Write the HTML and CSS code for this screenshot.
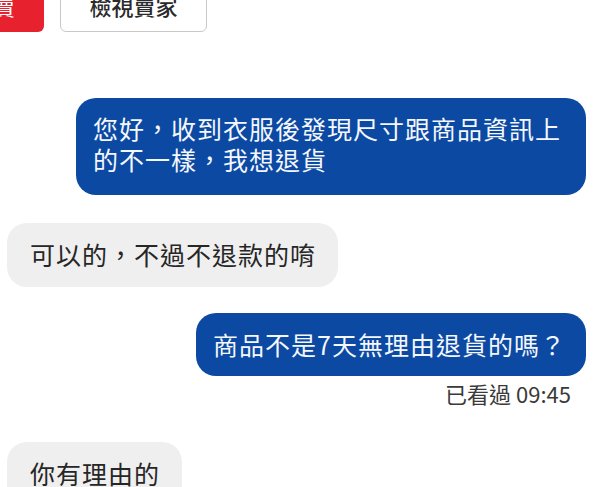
FILE: index.html
```html
<!DOCTYPE html>
<html lang="zh-Hant">
<head>
    <meta charset="UTF-8">
    <meta name="viewport" content="width=device-width, initial-scale=1.0">
    <title>聊聊</title>
    <link rel="stylesheet" href="styles.css">
</head>
<body>
    <!-- Top actions -->
    <div class="topbar">
        <div class="btn-red">賣</div>
        <div class="btn-outline">檢視賣家</div>
    </div>

    <!-- Messages -->
    <div class="chat">
        <div class="bubble mine wide">您好，收到衣服後發現尺寸跟商品資訊上的不一樣，我想退貨</div>
        <div class="bubble theirs">可以的，不過不退款的唷</div>
        <div class="bubble mine">商品不是7天無理由退貨的嗎？</div>
        <div class="seen">已看過 09:45</div>
        <div class="bubble theirs last">你有理由的</div>
    </div>
</body>
</html>
```

FILE: styles.css
```css
/* General */
body {
    margin: 0;
    background: #fff;
    font-family: "Noto Sans CJK TC", "Noto Sans", sans-serif;
    color: #222;
    overflow: hidden;
    height: 487px;
}

/* Top actions */
.topbar {
    display: flex;
    gap: 16px;
    margin-top: -22px;
}

.btn-red {
    height: 54px;
    margin-left: -30px;
    padding: 0 29px 0 23px;
    background: #e8212e;
    color: #fff;
    font-size: 22px;
    line-height: 54px;
    border-radius: 6px;
}

.btn-outline {
    box-sizing: border-box;
    width: 147px;
    height: 54px;
    border: 1px solid #c9c9c9;
    border-radius: 6px;
    font-size: 22px;
    line-height: 52px;
    text-align: center;
    color: #2a2a2a;
    font-weight: 500;
}

/* Messages */
.chat {
    display: flex;
    flex-direction: column;
    padding: 0 14px 0 7px;
    margin-top: 66px;
}

.bubble {
    box-sizing: border-box;
    font-size: 25px;
    letter-spacing: 1px;
    line-height: 31px;
    border-radius: 20px;
}

.mine {
    align-self: flex-end;
    background: #0c49a3;
    color: #f4f7fb;
    padding: 16px 20px 16px 17px;
}

.wide {
    max-width: 510px;
    padding: 15px 20px 20px 17px;
}

.theirs {
    align-self: flex-start;
    background: #efefef;
    color: #262626;
    padding: 16px 22px 17px 23px;
    margin-top: 28px;
}

.theirs + .mine {
    margin-top: 26px;
}

.seen {
    align-self: flex-end;
    margin: 3px 15px 0 0;
    font-size: 22px;
    line-height: 28px;
    color: #3a3a3a;
}

.last {
    margin-top: 35px;
}
```
